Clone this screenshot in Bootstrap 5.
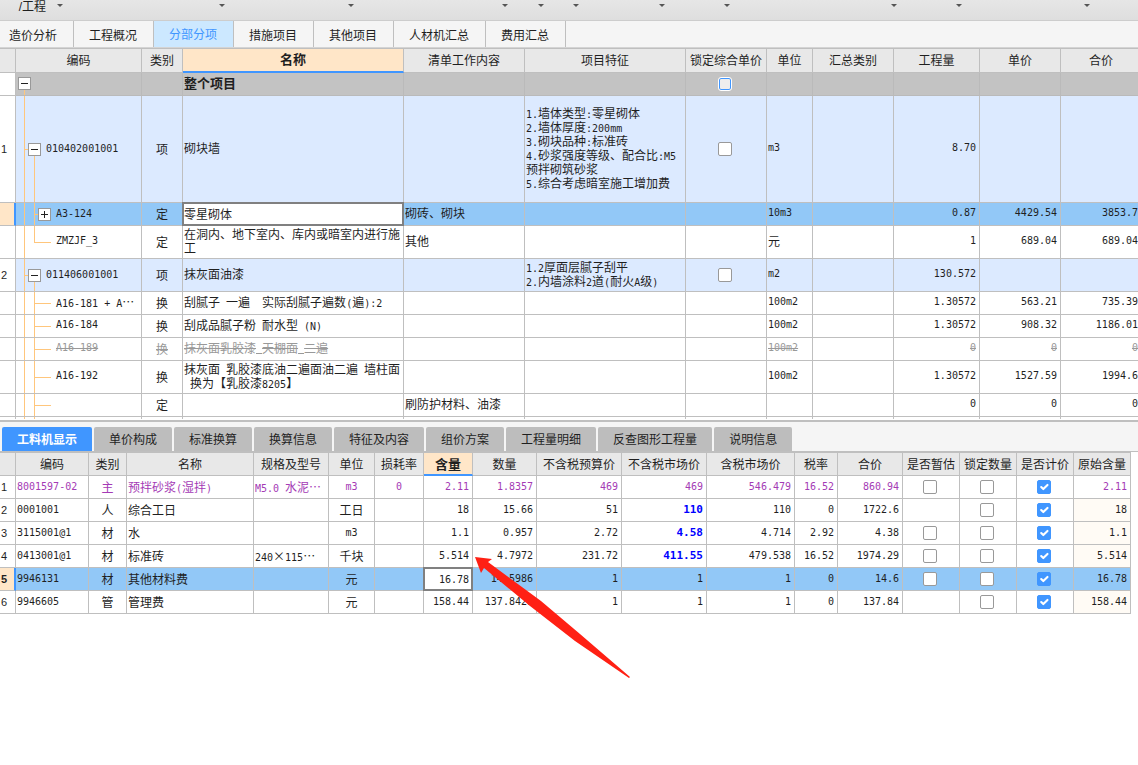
<!DOCTYPE html>
<html lang="zh-CN">
<head>
<meta charset="utf-8">
<meta name="viewport" content="width=device-width, initial-scale=1">
<title>分部分项</title>
<link href="https://cdn.jsdelivr.net/npm/bootstrap@5.3.0/dist/css/bootstrap.min.css" rel="stylesheet">
<script src="https://cdn.jsdelivr.net/npm/bootstrap@5.3.0/dist/js/bootstrap.bundle.min.js" defer></script>
<style>
:root{--line:#bfbfbf;--hl:#4096ff;--warm:#ffe6c8;--pick:#92c8f7;--tree:#ffc67c}
body{font:12px/14px "Liberation Sans","Noto Sans CJK SC",sans-serif;color:#1f1f1f;background:#fff}
/* top toolbar */
.toolstrip{display:grid;grid-template-columns:63px 162px 129px 154px 36px 35px 86px 65px 167px 65px 128px;height:21px;background:linear-gradient(#e6e6e6,#dedede);border-bottom:1px solid #cdcdcd;overflow:hidden}
.toolstrip button{display:flex;justify-content:flex-end;gap:11px;border:0;padding:0;background:none;line-height:14px;color:#1f1f1f}
.toolstrip button::after{content:"";border:3px solid transparent;border-top-color:#555;border-bottom:0;margin-top:4px}
/* page tabs */
.pagetabs{height:27px;background:#f5f5f5;border-bottom:1px solid #d4d4d4}
.pagetabs a{padding:8px 16px 0 15px;border-right:1px solid var(--line);color:#1f1f1f;text-decoration:none}
.pagetabs a:first-child{padding-left:9px}
.pagetabs a.active{background:#cce8ff;color:var(--hl);padding-top:7px}
/* detail tabs */
.subtabs{height:30px;padding:5px 2px 0;gap:2px;background:#f5f5f5;border-bottom:1px solid var(--line)}
.subtabs button{height:24px;padding:1px 15px 0;border:0;border-radius:2px 2px 0 0;background:#bdbdbd;color:#1f1f1f;line-height:14px}
.subtabs button.active{background:var(--hl);color:#fff;font-weight:700}
/* grids */
.grid{table-layout:fixed;border-collapse:separate;border-spacing:0;border-top:1px solid var(--line);font-family:"Noto Sans CJK SC",sans-serif}
.grid-main{width:1142px}
.grid-sub{width:1131px}
.grid th,.grid td{height:23px;padding:0 3px 0 1px;border:0 solid var(--line);border-width:0 1px 1px 0;vertical-align:middle;white-space:pre;overflow:hidden;line-height:14px}
.grid td.text-center{padding:0}
.grid thead th{background:#e8e8e8;font-weight:400;text-align:center;padding:0}
.grid-main thead th{height:24px;padding-bottom:2px}
.grid-main tbody td:not(:has(input)){padding-bottom:2px}
.grid thead th.cur{background:var(--warm);font-weight:700;font-size:13px;border-bottom:2px solid var(--hl)}
.grid tbody th{background:#fff;font:11px/14px "Liberation Sans",sans-serif;padding:0 1px}
.lt{font-family:"DejaVu Sans Mono",monospace;font-size:10px;font-style:normal}
i.lt,span.lt{line-height:10px}
.tall td,.tall th{height:33px}
.xtall td,.xtall th{height:107px}
.lead-row td{background-color:#c3c3c3;border-color:#bababa;font-weight:700;font-size:13px}
.group td{background-color:#dceaff}
.picked td{background-color:var(--pick)}
.grid .picked th{background:var(--warm);border-right:2px solid var(--hl);font-weight:700}
.voided td{color:#999;text-decoration:line-through}
.purple td{color:#a43ab5}
.grid-sub tr:not(.purple):not(.picked) td:last-child{background:#fffbf5}
.price{font-weight:700;font-size:11px;color:#00f}
.grid td:has(.editor){padding:0;overflow:visible}
.editor{display:block;width:100%;height:22px;border:1px solid #808080;outline:1px solid #808080;border-radius:0;padding:0 2px 0 0;background:#fff;color:#1f1f1f}
.editor:not(.lt){font-size:12px;padding-bottom:2px}
/* tree column */
.grid td[class*=lv]{background-repeat:no-repeat;background-image:linear-gradient(var(--tree) 0 0),linear-gradient(var(--tree) 0 0),linear-gradient(var(--tree) 0 0)}
.grid td.lv0{padding-left:2px;background-size:1px 50%,0 0,0 0;background-position:8px 100%}
.grid td.lv1{padding-left:12px;background-size:1px 100%,1px 50%,8px 1px;background-position:8px 0,18px 100%,8px 50%}
.grid td.lv2{padding-left:22px;background-size:1px 100%,1px 100%,8px 1px;background-position:8px 0,18px 0,18px 50%}
.grid td.lv3{padding-left:40px;background-size:1px 100%,1px 100%,17px 1px;background-position:8px 0,18px 0,18px 50%}
.grid td.lv3.end{background-size:1px 100%,1px 50%,17px 1px}
.knob{width:13px;height:13px;padding:0;border:1px solid #999;margin-right:5px;vertical-align:middle;background:linear-gradient(#222 0 0) center/7px 1px no-repeat #fff}
.knob.plus{background:linear-gradient(#222 0 0) center/7px 1px no-repeat,linear-gradient(#222 0 0) center/1px 7px no-repeat #fff}
.knob+span{vertical-align:middle}
.grid .form-check-input{display:block;width:14px;height:14px;margin:0 auto;border:1px solid #999;border-radius:2px;background-color:#fff}
.grid .form-check-input:checked{background-color:var(--hl);border-color:var(--hl);background-size:14px}
.grid .form-check-input.hot{width:12px;height:12px;background-color:#eee;border-color:var(--hl);outline:1px solid #fff}
.grid .stub td,.grid .stub th{height:2px;padding:0;border-bottom:0}
.grid td.stem{background-size:1px 100%,1px 100%,0 0}
.upper{border-bottom:2px solid var(--line);padding-bottom:1px}
.pointer{position:absolute;left:474px;top:103px;pointer-events:none}
</style>
</head>
<body class="min-vh-100 d-flex flex-column">
<header>
<div class="toolstrip">
<button>/工程</button><button aria-label="菜单"></button><button aria-label="菜单"></button><button aria-label="菜单"></button><button aria-label="菜单"></button><button aria-label="菜单"></button><button aria-label="菜单"></button><button aria-label="菜单"></button><button aria-label="菜单"></button><button aria-label="菜单"></button><button aria-label="菜单"></button>
</div>
<nav class="pagetabs d-flex">
<a href="#">造价分析</a><a href="#">工程概况</a><a href="#" class="active">分部分项</a><a href="#">措施项目</a><a href="#">其他项目</a><a href="#">人材机汇总</a><a href="#">费用汇总</a>
</nav>
</header>
<main class="flex-grow-1 d-flex flex-column">
<section class="upper overflow-hidden">
<table class="grid grid-main">
<colgroup><col width="16"><col width="126"><col width="41"><col width="221"><col width="121"><col width="161"><col width="81"><col width="46"><col width="81"><col width="86"><col width="81"><col width="81"></colgroup>
<thead><tr><th></th><th>编码</th><th>类别</th><th class="cur">名称</th><th>清单工作内容</th><th>项目特征</th><th>锁定综合单价</th><th>单位</th><th>汇总类别</th><th>工程量</th><th>单价</th><th>合价</th></tr></thead>
<tbody>
<tr class="lead-row"><th></th><td class="lv0"><button class="knob" aria-label="折叠"></button></td><td></td><td>整个项目</td><td></td><td></td><td><input class="form-check-input hot" type="checkbox" aria-label="锁定综合单价"></td><td></td><td></td><td></td><td></td><td></td></tr>
<tr class="group xtall"><th>1</th><td class="lv1"><button class="knob" aria-label="折叠"></button><span class="lt">010402001001</span></td><td class="text-center">项</td><td>砌块墙</td><td></td><td><i class="lt">1.</i>墙体类型<i class="lt">:</i>零星砌体<br><i class="lt">2.</i>墙体厚度<i class="lt">:200mm</i><br><i class="lt">3.</i>砌块品种<i class="lt">:</i>标准砖<br><i class="lt">4.</i>砂浆强度等级、配合比<i class="lt">:M5</i><br>预拌砌筑砂浆<br><i class="lt">5.</i>综合考虑暗室施工增加费</td><td><input class="form-check-input" type="checkbox" aria-label="锁定综合单价"></td><td class="lt">m3</td><td></td><td class="lt text-end">8.70</td><td></td><td></td></tr>
<tr class="picked"><th></th><td class="lv2"><button class="knob plus" aria-label="展开"></button><span class="lt">A3-124</span></td><td class="text-center">定</td><td><input class="editor" type="text" value="零星砌体" aria-label="名称"></td><td>砌砖、砌块</td><td></td><td></td><td class="lt">10m3</td><td></td><td class="lt text-end">0.87</td><td class="lt text-end">4429.54</td><td class="lt text-end">3853.7</td></tr>
<tr class="tall"><th></th><td class="lv3 end lt">ZMZJF_3</td><td class="text-center">定</td><td>在洞内、地下室内、库内或暗室内进行施<br>工</td><td>其他</td><td></td><td></td><td>元</td><td></td><td class="lt text-end">1</td><td class="lt text-end">689.04</td><td class="lt text-end">689.04</td></tr>
<tr class="group tall"><th>2</th><td class="lv1"><button class="knob" aria-label="折叠"></button><span class="lt">011406001001</span></td><td class="text-center">项</td><td>抹灰面油漆</td><td></td><td><i class="lt">1.2</i>厚面层腻子刮平<br><i class="lt">2.</i>内墙涂料<i class="lt">2</i>道<i class="lt">(</i>耐火<i class="lt">A</i>级<i class="lt">)</i></td><td><input class="form-check-input" type="checkbox" aria-label="锁定综合单价"></td><td class="lt">m2</td><td></td><td class="lt text-end">130.572</td><td></td><td></td></tr>
<tr><th></th><td class="lv3"><span class="lt">A16-181 + A</span>…</td><td class="text-center">换</td><td>刮腻子<i class="lt"> </i>一遍<i class="lt">  </i>实际刮腻子遍数<i class="lt">(</i>遍<i class="lt">):2</i></td><td></td><td></td><td></td><td class="lt">100m2</td><td></td><td class="lt text-end">1.30572</td><td class="lt text-end">563.21</td><td class="lt text-end">735.39</td></tr>
<tr><th></th><td class="lv3 lt">A16-184</td><td class="text-center">换</td><td>刮成品腻子粉<i class="lt"> </i>耐水型<i class="lt"> (N)</i></td><td></td><td></td><td></td><td class="lt">100m2</td><td></td><td class="lt text-end">1.30572</td><td class="lt text-end">908.32</td><td class="lt text-end">1186.01</td></tr>
<tr class="voided"><th></th><td class="lv3 lt">A16-189</td><td class="text-center">换</td><td>抹灰面乳胶漆<i class="lt"> </i>天棚面<i class="lt"> </i>二遍</td><td></td><td></td><td></td><td class="lt">100m2</td><td></td><td class="lt text-end">0</td><td class="lt text-end">0</td><td class="lt text-end">0</td></tr>
<tr class="tall"><th></th><td class="lv3 lt">A16-192</td><td class="text-center">换</td><td>抹灰面<i class="lt"> </i>乳胶漆底油二遍面油二遍<i class="lt"> </i>墙柱面<br><i class="lt"> </i>换为【乳胶漆<i class="lt">8205</i>】</td><td></td><td></td><td></td><td class="lt">100m2</td><td></td><td class="lt text-end">1.30572</td><td class="lt text-end">1527.59</td><td class="lt text-end">1994.6</td></tr>
<tr><th></th><td class="lv3"></td><td class="text-center">定</td><td></td><td>刷防护材料、油漆</td><td></td><td></td><td></td><td></td><td class="lt text-end">0</td><td class="lt text-end">0</td><td class="lt text-end">0</td></tr>
<tr class="stub"><th></th><td class="lv3 stem"></td><td></td><td></td><td></td><td></td><td></td><td></td><td></td><td></td><td></td><td></td></tr>
</tbody>
</table>
</section>
<section class="position-relative flex-grow-1">
<div class="subtabs d-flex">
<button class="active">工料机显示</button><button>单价构成</button><button>标准换算</button><button>换算信息</button><button>特征及内容</button><button>组价方案</button><button>工程量明细</button><button>反查图形工程量</button><button>说明信息</button>
</div>
<table class="grid grid-sub">
<colgroup><col width="16"><col width="73"><col width="38"><col width="127"><col width="75"><col width="46"><col width="49"><col width="49"><col width="64"><col width="85"><col width="85"><col width="88"><col width="43"><col width="65"><col width="57"><col width="57"><col width="57"><col width="57"></colgroup>
<thead><tr><th></th><th>编码</th><th>类别</th><th>名称</th><th>规格及型号</th><th>单位</th><th>损耗率</th><th class="cur">含量</th><th>数量</th><th>不含税预算价</th><th>不含税市场价</th><th>含税市场价</th><th>税率</th><th>合价</th><th>是否暂估</th><th>锁定数量</th><th>是否计价</th><th>原始含量</th></tr></thead>
<tbody>
<tr class="purple"><th>1</th><td class="lt">8001597-02</td><td class="text-center">主</td><td>预拌砂浆<i class="lt">(</i>湿拌<i class="lt">)</i></td><td><i class="lt">M5.0 </i>水泥…</td><td class="lt text-center">m3</td><td class="lt text-center">0</td><td class="lt text-end">2.11</td><td class="lt text-end">1.8357</td><td class="lt text-end">469</td><td class="lt text-end">469</td><td class="lt text-end">546.479</td><td class="lt text-end">16.52</td><td class="lt text-end">860.94</td><td><input class="form-check-input" type="checkbox" aria-label="是否暂估"></td><td><input class="form-check-input" type="checkbox" aria-label="锁定数量"></td><td><input class="form-check-input" type="checkbox" checked aria-label="是否计价"></td><td class="lt text-end">2.11</td></tr>
<tr><th>2</th><td class="lt">0001001</td><td class="text-center">人</td><td>综合工日</td><td></td><td class="text-center">工日</td><td></td><td class="lt text-end">18</td><td class="lt text-end">15.66</td><td class="lt text-end">51</td><td class="lt text-end price">110</td><td class="lt text-end">110</td><td class="lt text-end">0</td><td class="lt text-end">1722.6</td><td></td><td><input class="form-check-input" type="checkbox" aria-label="锁定数量"></td><td><input class="form-check-input" type="checkbox" checked aria-label="是否计价"></td><td class="lt text-end">18</td></tr>
<tr><th>3</th><td class="lt">3115001@1</td><td class="text-center">材</td><td>水</td><td></td><td class="lt text-center">m3</td><td></td><td class="lt text-end">1.1</td><td class="lt text-end">0.957</td><td class="lt text-end">2.72</td><td class="lt text-end price">4.58</td><td class="lt text-end">4.714</td><td class="lt text-end">2.92</td><td class="lt text-end">4.38</td><td><input class="form-check-input" type="checkbox" aria-label="是否暂估"></td><td><input class="form-check-input" type="checkbox" aria-label="锁定数量"></td><td><input class="form-check-input" type="checkbox" checked aria-label="是否计价"></td><td class="lt text-end">1.1</td></tr>
<tr><th>4</th><td class="lt">0413001@1</td><td class="text-center">材</td><td>标准砖</td><td><i class="lt">240</i>×<i class="lt">115</i>…</td><td class="text-center">千块</td><td></td><td class="lt text-end">5.514</td><td class="lt text-end">4.7972</td><td class="lt text-end">231.72</td><td class="lt text-end price">411.55</td><td class="lt text-end">479.538</td><td class="lt text-end">16.52</td><td class="lt text-end">1974.29</td><td><input class="form-check-input" type="checkbox" aria-label="是否暂估"></td><td><input class="form-check-input" type="checkbox" aria-label="锁定数量"></td><td><input class="form-check-input" type="checkbox" checked aria-label="是否计价"></td><td class="lt text-end">5.514</td></tr>
<tr class="picked"><th>5</th><td class="lt">9946131</td><td class="text-center">材</td><td>其他材料费</td><td></td><td class="text-center">元</td><td></td><td><input class="editor lt text-end" type="text" value="16.78" aria-label="含量"></td><td class="lt text-end">14.5986</td><td class="lt text-end">1</td><td class="lt text-end">1</td><td class="lt text-end">1</td><td class="lt text-end">0</td><td class="lt text-end">14.6</td><td><input class="form-check-input" type="checkbox" aria-label="是否暂估"></td><td><input class="form-check-input" type="checkbox" aria-label="锁定数量"></td><td><input class="form-check-input" type="checkbox" checked aria-label="是否计价"></td><td class="lt text-end">16.78</td></tr>
<tr><th>6</th><td class="lt">9946605</td><td class="text-center">管</td><td>管理费</td><td></td><td class="text-center">元</td><td></td><td class="lt text-end">158.44</td><td class="lt text-end">137.8428</td><td class="lt text-end">1</td><td class="lt text-end">1</td><td class="lt text-end">1</td><td class="lt text-end">0</td><td class="lt text-end">137.84</td><td></td><td><input class="form-check-input" type="checkbox" aria-label="锁定数量"></td><td><input class="form-check-input" type="checkbox" checked aria-label="是否计价"></td><td class="lt text-end">158.44</td></tr>
</tbody>
</table>
<svg class="pointer" width="160" height="160" viewBox="474 525 160 160" aria-hidden="true"><path fill="#ff2014" d="M475 557L492 559L488 562L541 601L580 634L630 677L629 678L575 641L530 606L484 568L481 573Z"/></svg>
</section>
</main>
</body>
</html>
